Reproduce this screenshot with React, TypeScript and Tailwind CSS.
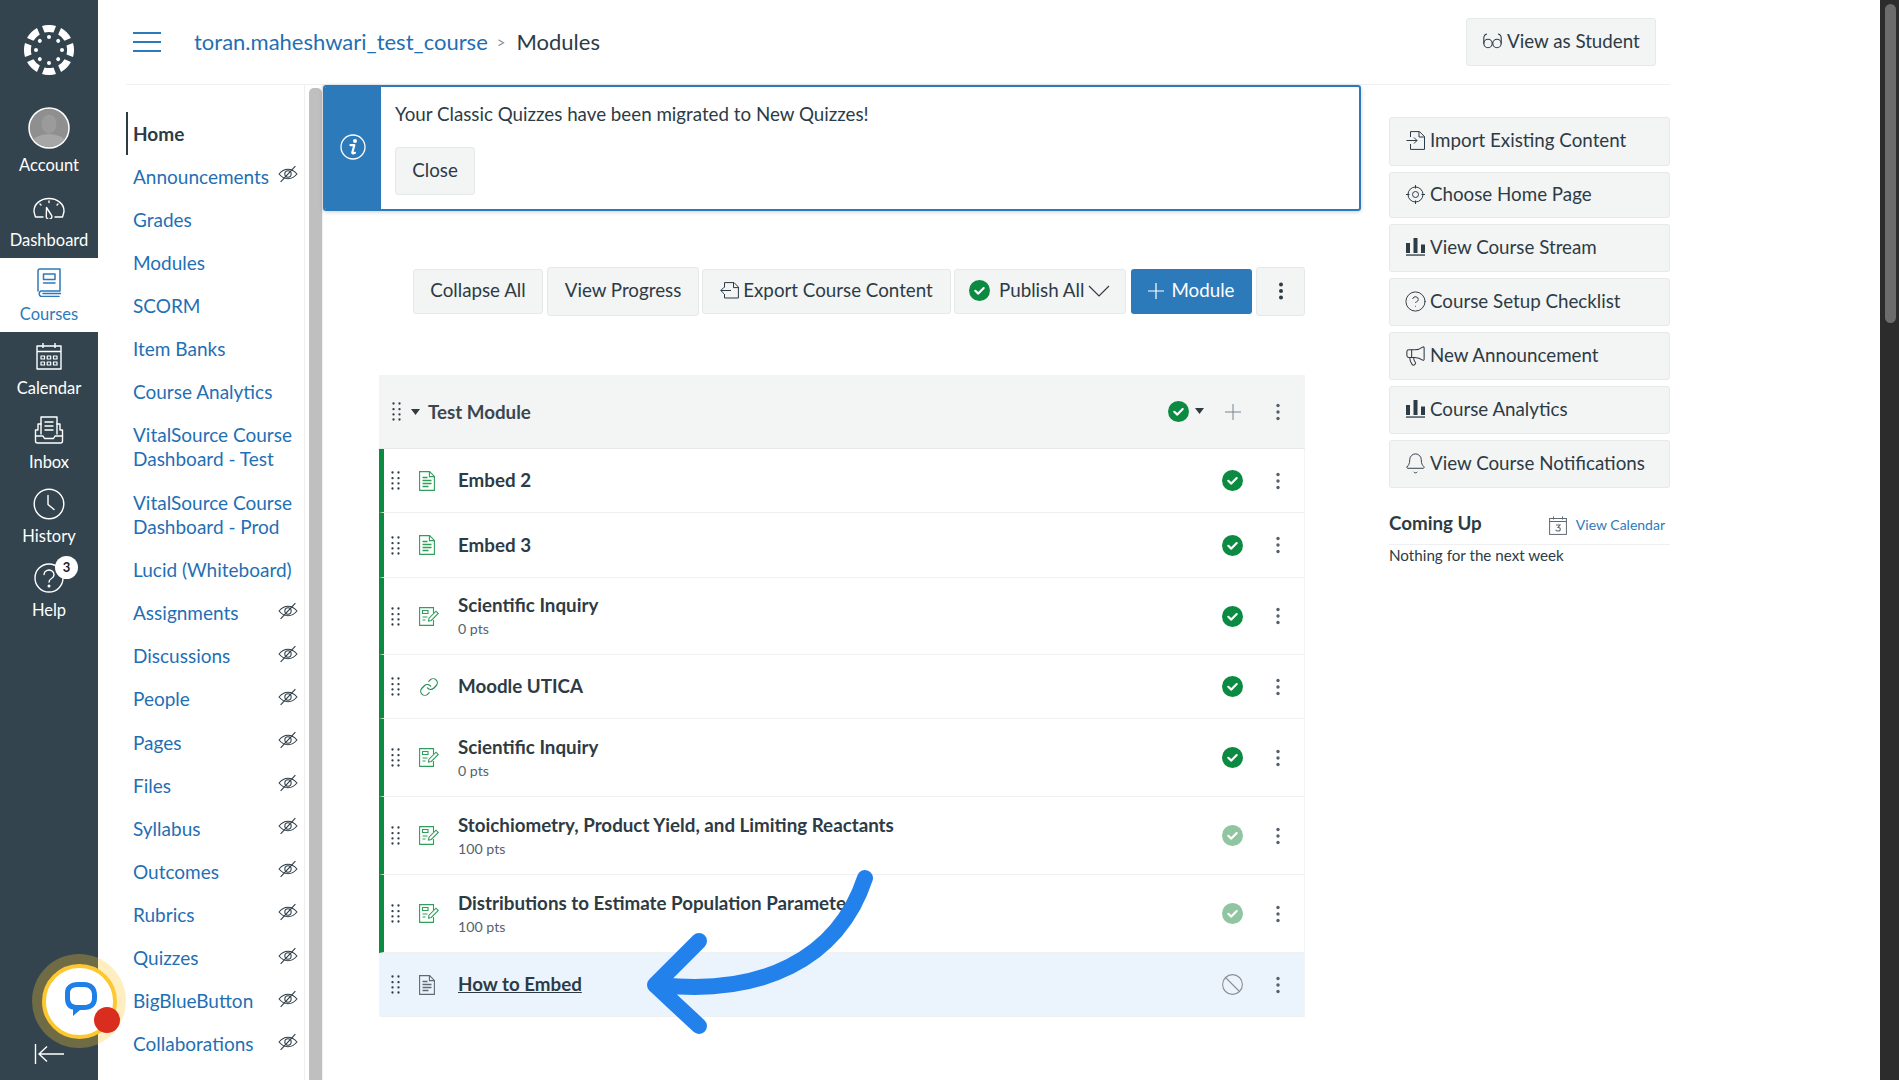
import type { ReactNode } from "react";
import { Bell, CircleHelp, Link, Megaphone } from "lucide-react";

const INK = "#2d3b45";

function CanvasLogo() {
  return (
    <svg width="50" height="50" viewBox="-25 -25 50 50" fill="#fff">
      {[0, 45, 90, 135, 180, 225, 270, 315].map((a) => (
        <g key={a} transform={`rotate(${a})`}>
          <path d="M-7 -24 A25 25 0 0 1 7 -24 L4.500 -17.500 A18 18 0 0 0 -4.500 -17.500Z" />
          <circle cx="0" cy="-13" r="2" />
        </g>
      ))}
    </svg>
  );
}

function Avatar() {
  return (
    <svg width="42" height="42" viewBox="0 0 42 42">
      <circle cx="21" cy="21" r="20" fill="#8f8f8f" stroke="#fff" strokeWidth="1.500" />
      <clipPath id="av"><circle cx="21" cy="21" r="19" /></clipPath>
      <g clipPath="url(#av)" fill="#a6a6a6">
        <ellipse cx="21" cy="36" rx="17" ry="9" />
        <ellipse cx="21" cy="17" rx="7.500" ry="9.500" fill="#9b9b9b" />
      </g>
    </svg>
  );
}

const navIcon = { fill: "none", stroke: "currentColor", strokeWidth: 1.4, strokeLinecap: "round", strokeLinejoin: "round" } as const;

function DashIcon() {
  return (
    <svg width="32" height="22" viewBox="0 0 32 22" {...navIcon}>
      <path d="M10 20H2.500C1.500 17 1 15.500 1 14 1 7 7.500 1.500 16 1.500S31 7 31 14c0 1.500-.5 3-1.500 6H22" />
      <path d="M13.500 10.500l4.500 7a2.800 2.800 0 1 1-4.700 1.600z" />
      <path d="M16 4v1.500M7 7l1 1M25 7l-1 1" />
    </svg>
  );
}

function BookIcon() {
  return (
    <svg width="24" height="29" viewBox="0 0 24 29" {...navIcon} strokeWidth={1.500}>
      <path d="M1 23V3a2 2 0 0 1 2-2h20v22H4a3 3 0 0 0 0 5.500h18" />
      <rect x="6.500" y="6" width="11.500" height="5.500" />
      <path d="M6.500 15h11.500" />
      <path d="M6 25.500h18" />
    </svg>
  );
}

function CalendarIcon() {
  return (
    <svg width="26" height="28" viewBox="0 0 26 28" {...navIcon} strokeLinecap="butt">
      <rect x="1" y="4" width="24" height="23" />
      <path d="M1 9.500h24M7 1v5M19 1v5" />
      <path d="M5 14h3.500v3H5zM11.200 14h3.500v3h-3.500zM17.500 14H21v3h-3.500zM5 20h3.500v3H5zM11.200 20h3.500v3h-3.500zM17.500 20H21v3h-3.500z" strokeWidth={1.200} />
    </svg>
  );
}

function InboxIcon() {
  return (
    <svg width="30" height="28" viewBox="0 0 30 28" {...navIcon}>
      <path d="M7 18V1h16v17" />
      <path d="M11 6h8M11 10h8M11 14h8" />
      <path d="M7 8H4v6H1.500v11a2 2 0 0 0 2 2h23a2 2 0 0 0 2-2V14H26V8h-3" />
      <path d="M1.500 20h7.500l1.500 2.500h9l1.500-2.500h7.500" />
    </svg>
  );
}

function ClockIcon() {
  return (
    <svg width="32" height="32" viewBox="0 0 32 32" {...navIcon}>
      <circle cx="16" cy="16" r="14.800" />
      <path d="M15 7.500V16.500l6 5" />
    </svg>
  );
}

function HelpIcon() {
  return (
    <svg width="30" height="30" viewBox="0 0 30 30" {...navIcon}>
      <circle cx="15" cy="15" r="14" />
      <path d="M10 11.500a5 4.500 0 1 1 7.500 4c-1.500.9-2.500 1.700-2.500 3.500" />
      <circle cx="15" cy="23" r=".8" fill="currentColor" />
    </svg>
  );
}

function CollapseIcon() {
  return (
    <svg width="32" height="22" viewBox="0 0 32 22" fill="none" stroke="#fff" strokeWidth="1.400">
      <path d="M1.500 1v20M30 11H5M13 3.500L5 11l8 7.500" />
    </svg>
  );
}

function EyeOff() {
  return (
    <svg width="20" height="18" viewBox="0 0 19 17" fill="none" stroke={INK} strokeWidth="1" className="shrink-0 -mt-[5px]">
      <path d="M1 8.500C3.500 5.500 6.500 4 9.500 4s6 1.500 8.500 4.500c-2.500 3-5.500 4.500-8.500 4.500S3.500 11.500 1 8.500z" />
      <circle cx="9.500" cy="8.500" r="3" />
      <path d="M2.500 16L16.500 1" />
    </svg>
  );
}

function Drag() {
  return (
    <svg width="9" height="19" viewBox="0 0 9 19" fill={INK} className="shrink-0">
      {[1.500, 7.500].map((x) =>
        [1.500, 7.200, 12.400, 17.500].map((y) => <circle key={`${x}-${y}`} cx={x} cy={y} r="1.150" />)
      )}
    </svg>
  );
}

function Kebab({ color = "#55606b", size = 1.700 }: { color?: string; size?: number }) {
  return (
    <svg width="6" height="18" viewBox="0 0 6 18" fill={color} className="shrink-0">
      <circle cx="3" cy="2.500" r={size} />
      <circle cx="3" cy="9" r={size} />
      <circle cx="3" cy="15.500" r={size} />
    </svg>
  );
}

function Check({ size = 21, light = false }: { size?: number; light?: boolean }) {
  return (
    <svg width={size} height={size} viewBox="0 0 21 21" className="shrink-0">
      <circle cx="10.500" cy="10.500" r="10.500" fill={light ? "#8fc5a0" : "#0b8a41"} />
      <path d="M6.300 10.800l3 2.800 5.400-5.500" fill="none" stroke="#fff" strokeWidth="2.200" strokeLinecap="round" strokeLinejoin="round" />
    </svg>
  );
}

function Unpublished() {
  return (
    <svg width="21" height="21" viewBox="0 0 21 21" fill="none" stroke="#8b8f93" strokeWidth="1.100" className="shrink-0">
      <circle cx="10.500" cy="10.500" r="9.900" />
      <path d="M3.500 3.500l14 14" />
    </svg>
  );
}

function PageIcon({ color }: { color: string }) {
  return (
    <svg width="16" height="20" viewBox="0 0 16 20" fill="none" stroke={color} strokeWidth="1.100">
      <path d="M.6.6h10l4.800 4.800v14H.6z" />
      <path d="M10.400.6v5h5" />
      <path d="M3.500 6.500h5M3.500 9.500h9M3.500 12.500h9M3.500 15.500h6" strokeWidth="1.300" />
    </svg>
  );
}

function QuizIcon() {
  return (
    <svg width="20" height="19" viewBox="0 0 20 19" fill="none" stroke="#2f9e5b" strokeWidth="1.100">
      <path d="M14.500 6V.6H.6v17.800h13.900V13" />
      <path d="M3.500 3.500h5.500v3H3.500zM3.500 10h5M3.500 13h3" />
      <path d="M9.500 14l.5-2.800L17 4.200l2.300 2.300-7 7z" />
    </svg>
  );
}

function InfoIcon() {
  return (
    <svg width="26" height="26" viewBox="0 0 26 26" fill="none" stroke="#fff" strokeWidth="1.300">
      <circle cx="13" cy="13" r="12" />
      <path d="M10.500 11.200h3.800l-2 7.300c-.2.900.6 1.300 2.700.3" strokeWidth="2.200" strokeLinejoin="round" strokeLinecap="round" />
      <circle cx="15" cy="7" r="2" fill="#fff" stroke="none" />
    </svg>
  );
}

function Glasses() {
  return (
    <svg width="19" height="16" viewBox="0 0 19 16" fill="none" stroke={INK} strokeWidth="1.100" className="shrink-0">
      <circle cx="5" cy="10.500" r="4.200" />
      <circle cx="14" cy="10.500" r="4.200" />
      <path d="M.8 10.500V5C.8 3 2 1.500 4 1M18.200 10.500V5C18.200 3 17 1.500 15 1M9.200 9.500h.6" />
    </svg>
  );
}

function ExportIcon() {
  return (
    <svg width="19" height="17" viewBox="0 0 19 17" fill="none" stroke={INK} strokeWidth="1" className="shrink-0">
      <path d="M4.500 5.500V.6h9.500l4.400 4.400v11H4.500v-4" />
      <path d="M13.500.6v5h5" />
      <path d="M11 8.500H.8M4 5.300L.8 8.500 4 11.700" />
    </svg>
  );
}

function ImportIcon() {
  return (
    <svg width="19" height="19" viewBox="0 0 19 19" fill="none" stroke={INK} strokeWidth="1">
      <path d="M4.500 6V.6h9l5 5v12.800h-14V13" />
      <path d="M13 .6v5.400h5.500" />
      <path d="M.5 9.500h10.500M8 6.500l3 3-3 3" />
    </svg>
  );
}

function TargetIcon() {
  return (
    <svg width="19" height="19" viewBox="0 0 19 19" fill="none" stroke={INK} strokeWidth="1">
      <circle cx="9.500" cy="9.500" r="7.500" />
      <circle cx="9.500" cy="9.500" r="3" />
      <path d="M9.500 0v3.500M9.500 15.500v3.500M0 9.500h3.500M15.500 9.500h3.500" />
    </svg>
  );
}

function BarsIcon() {
  return (
    <svg width="19" height="18" viewBox="0 0 19 18" fill={INK}>
      <rect x="0" y="5" width="4" height="10" />
      <rect x="7.500" y="0" width="4" height="15" />
      <rect x="15" y="6.500" width="4" height="8.500" />
      <rect x="0" y="16.400" width="19" height="1.300" />
    </svg>
  );
}

function CalSmall() {
  return (
    <svg width="18" height="19" viewBox="0 0 18 19" fill="none" stroke="#5f6973" strokeWidth="1">
      <rect x=".6" y="2.500" width="16.800" height="15.900" />
      <path d="M.6 5.500h16.800M4.500.5v3M13.500.5v3" />
      <path d="M7 9h4l-2 2.500c1.500 0 2.300.7 2.300 1.700s-1 1.800-2.300 1.800-2-.5-2.300-1.300" strokeWidth="1.100" />
    </svg>
  );
}

function Btn({ className, children }: { className: string; children: ReactNode }) {
  return (
    <div className={`flex items-center rounded-[3px] border border-[#e6e9ea] bg-[#f3f4f4] pb-[2px] text-[18.750px] text-[#2d3b45] ${className}`}>
      {children}
    </div>
  );
}

const globalNav = [
  { label: "Account", icon: <Avatar />, cls: "-mt-[6px]" },
  { label: "Dashboard", icon: <DashIcon /> },
  { label: "Courses", icon: <BookIcon />, active: true },
  { label: "Calendar", icon: <CalendarIcon /> },
  { label: "Inbox", icon: <InboxIcon /> },
  { label: "History", icon: <ClockIcon /> },
  { label: "Help", icon: <HelpIcon />, badge: "3" },
];

const courseNav: { label: string[]; hidden?: boolean; active?: boolean }[] = [
  { label: ["Home"], active: true },
  { label: ["Announcements"], hidden: true },
  { label: ["Grades"] },
  { label: ["Modules"] },
  { label: ["SCORM"] },
  { label: ["Item Banks"] },
  { label: ["Course Analytics"] },
  { label: ["VitalSource Course", "Dashboard - Test"] },
  { label: ["VitalSource Course", "Dashboard - Prod"] },
  { label: ["Lucid (Whiteboard)"] },
  { label: ["Assignments"], hidden: true },
  { label: ["Discussions"], hidden: true },
  { label: ["People"], hidden: true },
  { label: ["Pages"], hidden: true },
  { label: ["Files"], hidden: true },
  { label: ["Syllabus"], hidden: true },
  { label: ["Outcomes"], hidden: true },
  { label: ["Rubrics"], hidden: true },
  { label: ["Quizzes"], hidden: true },
  { label: ["BigBlueButton"], hidden: true },
  { label: ["Collaborations"], hidden: true },
];

type Row = {
  title: string;
  sub?: string;
  kind: "page" | "quiz" | "link" | "draft";
  h: string;
  status: "on" | "light" | "off";
};

const rows: Row[] = [
  { title: "Embed 2", kind: "page", h: "h-[64px]", status: "on" },
  { title: "Embed 3", kind: "page", h: "h-[65px]", status: "on" },
  { title: "Scientific Inquiry", sub: "0 pts", kind: "quiz", h: "h-[77px]", status: "on" },
  { title: "Moodle UTICA", kind: "link", h: "h-[64px]", status: "on" },
  { title: "Scientific Inquiry", sub: "0 pts", kind: "quiz", h: "h-[78px]", status: "on" },
  { title: "Stoichiometry, Product Yield, and Limiting Reactants", sub: "100 pts", kind: "quiz", h: "h-[78px]", status: "light" },
  { title: "Distributions to Estimate Population Parameters", sub: "100 pts", kind: "quiz", h: "h-[78px]", status: "light" },
  { title: "How to Embed", kind: "draft", h: "h-[64px]", status: "off" },
];

const sideButtons = [
  { label: "Import Existing Content", icon: <ImportIcon />, h: "h-[49px]" },
  { label: "Choose Home Page", icon: <TargetIcon />, h: "h-[46px]" },
  { label: "View Course Stream", icon: <BarsIcon />, h: "h-[48px]" },
  { label: "Course Setup Checklist", icon: <CircleHelp size={23} strokeWidth={1} color={INK} className="shrink-0" />, h: "h-[48px]" },
  { label: "New Announcement", icon: <Megaphone size={23} strokeWidth={1.100} color={INK} className="shrink-0" />, h: "h-[48px]" },
  { label: "Course Analytics", icon: <BarsIcon />, h: "h-[48px]" },
  { label: "View Course Notifications", icon: <Bell size={23} strokeWidth={1} color={INK} className="shrink-0" />, h: "h-[48px]" },
];

function ModuleRow({ row }: { row: Row }) {
  const draft = row.kind === "draft";
  return (
    <div
      className={`flex items-center border-b border-r border-b-[#eef0f1] border-r-[#f3f4f5] border-l-[5px] ${row.h} ${
        draft ? "border-l-transparent bg-[#ebf4fd]" : "border-l-[#0b8a41] bg-white"
      }`}
    >
      <div className="flex w-[35px] shrink-0 pl-[7px]">
        <Drag />
      </div>
      <div className="flex w-[39px] shrink-0">
        {row.kind === "page" && <PageIcon color="#2f9e5b" />}
        {row.kind === "draft" && <PageIcon color="#5f6973" />}
        {row.kind === "quiz" && <QuizIcon />}
        {row.kind === "link" && <Link size={20} strokeWidth={1.400} color="#1f8f4d" />}
      </div>
      <div className="min-w-0 flex-1">
        <div className={`-mt-[1px] text-[18.750px] font-bold leading-[24px] text-[#2d3b45] ${draft ? "underline" : ""}`}>{row.title}</div>
        {row.sub && <div className="mt-[3px] text-[14.200px] leading-[18px] text-[#56636d]">{row.sub}</div>}
      </div>
      <div className="mr-[32px] flex items-center">
        {row.status === "off" ? <Unpublished /> : <Check light={row.status === "light"} />}
      </div>
      <div className="mr-[23px] flex">
        <Kebab />
      </div>
    </div>
  );
}

export default function App() {
  return (
    <div className="relative flex h-[1080px] w-[1899px] overflow-hidden bg-white font-[Lato,sans-serif] text-[#2d3b45]">
      <aside className="flex h-full w-[98px] shrink-0 flex-col bg-[#33444f] text-white">
        <div className="flex h-[110px] shrink-0 items-start justify-center pt-[25px]">
          <CanvasLogo />
        </div>
        {globalNav.map((item) => (
          <div
            key={item.label}
            className={`flex h-[74px] shrink-0 flex-col items-center ${item.active ? "bg-white text-[#2d7abb]" : ""}`}
          >
            <div className={`relative flex h-[46px] shrink-0 items-center justify-center pt-[2px] ${item.cls ?? ""}`}>
              {item.icon}
              {item.badge && (
                <span className="absolute -right-[14px] top-[2px] flex h-[23px] w-[23px] items-center justify-center rounded-full bg-white text-[13px] font-bold text-[#222]">
                  {item.badge}
                </span>
              )}
            </div>
            <div className={`text-[16.500px] leading-[18px] ${item.cls ? "mt-[6px]" : "mt-[1px]"}`}>{item.label}</div>
          </div>
        ))}
        <div className="mt-auto flex justify-center pb-[15px] pl-px">
          <CollapseIcon />
        </div>
      </aside>

      <div className="flex min-w-0 flex-1 flex-col">
        <header className="ml-[28px] flex h-[85px] w-[1544px] shrink-0 items-center border-b border-[#eef0f1]">
          <div className="ml-[7px] flex w-[28px] flex-col gap-[7px]">
            <div className="h-[2px] bg-[#2d7abb]" />
            <div className="h-[2px] bg-[#2d7abb]" />
            <div className="h-[2px] bg-[#2d7abb]" />
          </div>
          <span className="ml-[33px] pb-[2px] text-[22px] text-[#1f6fb5]">toran.maheshwari_test_course</span>
          <span className="ml-[9px] text-[15px] text-[#8b9298]">&gt;</span>
          <span className="ml-[11px] pb-[2px] text-[22px] text-[#2d3b45]">Modules</span>
          <Btn className="ml-auto mr-[14px] h-[48px] w-[190px] gap-[5px] pl-[16px]">
            <Glasses />
            View as Student
          </Btn>
        </header>

        <div className="flex min-h-0 flex-1">
          <nav className="ml-[28px] flex w-[179px] shrink-0 flex-col border-r border-[#eef0f1] pt-[27px]">
            {courseNav.map((item) => (
              <div
                key={item.label[0] + item.label[1]}
                className={`flex shrink-0 items-center justify-between pr-[6px] text-[19px] leading-[24px] ${
                  item.label.length > 1 ? "h-[67.500px]" : "h-[43.100px]"
                } ${item.active ? "border-l-2 border-[#2d3b45] pl-[5px] font-bold text-[#2d3b45]" : "pl-[7px] text-[#1f6fb5]"}`}
              >
                <div className="whitespace-nowrap">
                  {item.label.map((line) => (
                    <div key={line}>{line}</div>
                  ))}
                </div>
                {item.hidden && <EyeOff />}
              </div>
            ))}
          </nav>

          <div className="flex w-[18px] shrink-0 border-r border-[#eef0f1] pl-[4px] pt-[3px]">
            <div className="w-[10px] flex-1 rounded-t-[5px] bg-[#bfbfbf]" />
          </div>

          <main className="flex w-[1038px] shrink-0 flex-col">
            <div className="flex h-[126px] shrink-0 overflow-hidden rounded-[3px] border-2 border-[#2d7abb] shadow-[0_1px_4px_rgba(0,0,0,0.2)]">
              <div className="flex w-[56px] shrink-0 items-center justify-center bg-[#2d7abb] pb-[2px]">
                <InfoIcon />
              </div>
              <div className="flex flex-col items-start pl-[14px] pt-[14px]">
                <div className="text-[18.750px] leading-[26px]">Your Classic Quizzes have been migrated to New Quizzes!</div>
                <Btn className="mt-[20px] h-[48px] w-[80px] justify-center">Close</Btn>
              </div>
            </div>

            <div className="ml-[90px] mt-[56px] flex h-[49px] shrink-0 items-center">
              <Btn className="h-[45px] w-[130px] justify-center">Collapse All</Btn>
              <Btn className="ml-[4px] h-[49px] w-[152px] justify-center">View Progress</Btn>
              <Btn className="ml-[3px] h-[45px] w-[249px] justify-center gap-[4px]">
                <ExportIcon />
                Export Course Content
              </Btn>
              <Btn className="ml-[3px] h-[45px] w-[172px] gap-[9px] border-[#dfe2e4] pl-[14px]">
                <Check />
                <span className="flex items-center gap-[4px]">
                  Publish All
                  <svg width="22" height="12" viewBox="0 0 22 12" fill="none" stroke={INK} strokeWidth="1.200">
                    <path d="M1 1l10 10L21 1" />
                  </svg>
                </span>
              </Btn>
              <div className="ml-[5px] flex h-[45px] w-[121px] items-center justify-center gap-[7px] rounded-[3px] bg-[#2d7abb] pb-[2px] text-[18.750px] text-white">
                <svg width="16" height="16" viewBox="0 0 16 16" stroke="#fff" strokeWidth="1.200">
                  <path d="M8 0v16M0 8h16" />
                </svg>
                Module
              </div>
              <Btn className="ml-[4px] h-[49px] w-[49px] justify-center">
                <Kebab color={INK} size={2} />
              </Btn>
            </div>

            <section className="ml-[56px] mt-[59px] w-[926px] shrink-0">
              <div className="flex h-[74px] items-center border-b border-[#e6e9ea] bg-[#f3f4f4]">
                <div className="ml-[13px] flex">
                  <Drag />
                </div>
                <svg width="9" height="6" viewBox="0 0 9 6" fill={INK} className="ml-[10px]">
                  <path d="M0 0h9L4.500 6z" />
                </svg>
                <span className="ml-[8px] flex-1 pt-[1px] text-[18.750px] font-bold leading-[24px] text-[#3a4751]">Test Module</span>
                <Check />
                <svg width="9" height="6" viewBox="0 0 9 6" fill={INK} className="ml-[6px] -mt-[2px]">
                  <path d="M0 0h9L4.500 6z" />
                </svg>
                <svg width="16" height="16" viewBox="0 0 16 16" stroke="#7b858d" strokeWidth="1" className="ml-[21px]">
                  <path d="M8 0v16M0 8h16" />
                </svg>
                <div className="ml-[34px] mr-[24px] flex">
                  <Kebab />
                </div>
              </div>
              {rows.map((row, i) => (
                <ModuleRow key={i} row={row} />
              ))}
            </section>
          </main>

          <div className="ml-[28px] flex w-[281px] shrink-0 flex-col pt-[32px]">
            <div className="flex flex-col gap-[6px]">
              {sideButtons.map((b) => (
                <Btn key={b.label} className={`${b.h} gap-[5px] pl-[16px]`}>
                  <span className="flex w-[19px] shrink-0 justify-center">{b.icon}</span>
                  {b.label}
                </Btn>
              ))}
            </div>
            <div className="mt-[22px] flex h-[35px] items-center border-b border-[#eef0f1] pb-[4px]">
              <span className="-mt-[3px] flex-1 text-[18.750px] font-bold">Coming Up</span>
              <CalSmall />
              <span className="-mt-px ml-[9px] mr-[5px] text-[14px] text-[#2d7abb]">View Calendar</span>
            </div>
            <div className="text-[15.200px] leading-[20px]">Nothing for the next week</div>
          </div>
        </div>
      </div>

      <div className="flex w-[19px] shrink-0 flex-col bg-[#2c2c2c] pl-[5px] pt-[4px]">
        <div className="h-[319px] w-[11px] rounded-full bg-[#6c6c6c]" />
      </div>

      {/* launcher badge hanging over the nav edge */}
      <div className="absolute left-[32px] top-[954px] flex h-[94px] w-[94px] items-center justify-center rounded-full bg-[#fdc82f]/30">
        <div className="relative flex h-[75px] w-[75px] items-center justify-center rounded-full border-[4px] border-[#fdc82f] bg-white">
          <svg width="34" height="36" viewBox="0 0 34 36" className="-mt-[5px] ml-[3px]">
            <path
              d="M14 1h6c8 0 13 5 13 13v3c0 8-5 12-13 12h-4l-7 6v-6.500C4 28 1 24 1 17v-5C1 5 6 1 14 1z"
              fill="#1f7fe8"
            />
            <path d="M14 6h6c5 0 8 3 8 8v3c0 5-3 7-8 7H13c-4 0-7-2-7-7v-5c0-4 3-6 8-6z" fill="#fff" />
          </svg>
          <div className="absolute bottom-[2px] -right-[7px] h-[26px] w-[26px] rounded-full bg-[#d92d20]" />
        </div>
      </div>

      {/* annotation arrow drawn over the list */}
      <svg className="pointer-events-none absolute left-0 top-0" width="1899" height="1080" fill="none">
        <path
          d="M865 878C838 960 760 996 660 985M699 941L655 985L699 1026"
          stroke="#2381ec"
          strokeWidth="16"
          strokeLinecap="round"
          strokeLinejoin="round"
        />
      </svg>
    </div>
  );
}
